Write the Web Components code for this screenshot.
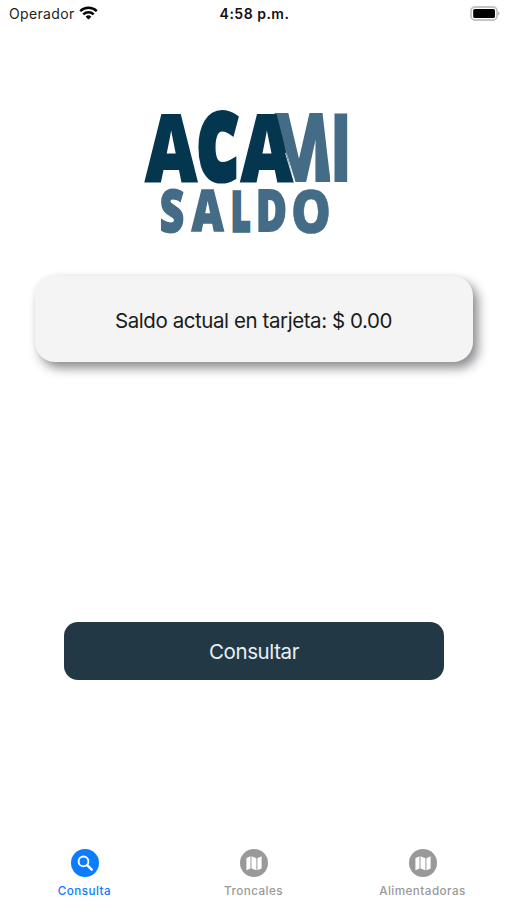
<!DOCTYPE html>
<html lang="es">
<head>
<meta charset="utf-8">
<meta name="viewport" content="width=device-width, initial-scale=1">
<title>ACAMI Saldo</title>
<style>
  html, body { height: 100%; margin: 0; }
  body {
    background: #fff;
    color: #1b1b1b;
    font-family: Inter, "Liberation Sans", sans-serif;
    overflow: hidden;
  }
</style>
</head>
<body>
<saldo-app></saldo-app>

<script>
// status bar
class StatusBar extends HTMLElement {
  constructor() {
    super();
    this.attachShadow({ mode: 'open' });
    this.shadowRoot.innerHTML = `
      <style>
        :host {
          display: grid;
          grid-template-columns: 1fr auto 1fr;
          align-items: center;
          height: 28px;
          padding: 0 7px 0 9px;
          box-sizing: border-box;
          font-size: 14px;
          line-height: 28px;
          color: #222;
        }
        .carrier { display: flex; align-items: center; gap: 4px; letter-spacing: 0.35px; }
        .carrier svg { margin-top: -2px; }
        .time { font-weight: 600; letter-spacing: 0.5px; color: #111; }
        .battery { justify-self: end; }
        svg { display: block; }
      </style>
      <div class="carrier">
        <slot name="carrier"></slot>
        <svg width="19" height="14" viewBox="0 0 19 14">
          <g fill="none" stroke="#050505" stroke-width="2.5">
            <path d="M1.2 5.1a11.8 11.8 0 0 1 16.6 0"/>
            <path d="M4.3 8.4a7.4 7.4 0 0 1 10.4 0"/>
          </g>
          <path d="M9.5 13.6L6.6 10.7a4.1 4.1 0 0 1 5.8 0z" fill="#050505"/>
        </svg>
      </div>
      <div class="time"><slot name="time"></slot></div>
      <svg class="battery" width="30" height="17" viewBox="0 0 30 17">
        <rect x="1" y="1" width="26" height="13" rx="4" fill="#fff" stroke="#c4c4c4" stroke-width="1.8"/>
        <rect x="3.2" y="3" width="21.8" height="9" rx="1.6" fill="#000"/>
        <path d="M28.2 5.4c1.7.6 1.7 3.6 0 4.2z" fill="#aaa"/>
      </svg>
    `;
  }
}

// logo: every letter is stretched so its ink fills the given box
class AcamiLogo extends HTMLElement {
  constructor() {
    super();
    this._font = '800 100px "Open Sans", Lato, sans-serif';
    // [letter, left, top, right, bottom, outline, class]
    this._letters = [
      ['M', 123, 3, 187, 72, 2, 'light cut'],
      ['A', 0.5, 4.2, 54, 73, 2, 'dark'],
      ['C', 54.3, 0.8, 94.3, 74, 8, 'dark'],
      ['A', 96, 4.2, 150, 73, 2, 'dark'],
      ['I', 190, 3, 203.7, 72, 0, 'light'],
      ['S', 16.7, 79, 39.5, 123.7, 3, 'light'],
      ['A', 47, 80.8, 80.3, 122.8, 3, 'light'],
      ['L', 88.3, 80.3, 106.3, 122.3, 6, 'light'],
      ['D', 114, 80.3, 141.7, 122.3, 4, 'light'],
      ['O', 149.3, 79, 185, 123.7, 1, 'light']
    ];

    this.attachShadow({ mode: 'open' });
    this.shadowRoot.innerHTML = `
      <style>
        :host { display: block; width: 204px; height: 125px; }
        svg { display: block; overflow: visible; }
        text { font: ${this._font}; }
        .dark { fill: #05364f; stroke: #05364f; }
        .light { fill: #446c87; stroke: #446c87; }
      </style>
      <svg width="204" height="125" viewBox="0 0 204 125">
        <defs>
          <!-- trims the M along the second A and slants its right leg -->
          <clipPath id="cut"><path d="M130.5 3H178.5L186.5 72H151.5z"/></clipPath>
        </defs>
      </svg>
    `;
    this._svg = this.shadowRoot.querySelector('svg');
  }

  connectedCallback() {
    const ctx = document.createElement('canvas').getContext('2d');
    ctx.font = this._font;
    const ns = 'http://www.w3.org/2000/svg';

    for (const [letter, left, top, right, bottom, outline, cls] of this._letters) {
      const m = ctx.measureText(letter);
      const sx = (right - left) / (m.actualBoundingBoxRight + m.actualBoundingBoxLeft + outline);
      const sy = (bottom - top) / (m.actualBoundingBoxAscent + m.actualBoundingBoxDescent + outline);
      const x = left + (m.actualBoundingBoxLeft + outline / 2) * sx;
      const y = bottom - (m.actualBoundingBoxDescent + outline / 2) * sy;

      const g = document.createElementNS(ns, 'g');
      const text = document.createElementNS(ns, 'text');
      if (cls.includes('cut')) g.setAttribute('clip-path', 'url(#cut)');
      text.setAttribute('class', cls);
      text.setAttribute('stroke-width', outline);
      text.setAttribute('transform', `translate(${x} ${y}) scale(${sx} ${sy})`);
      text.textContent = letter;
      g.appendChild(text);
      this._svg.appendChild(g);
    }

    // thin gap between the A and the M
    const gap = document.createElementNS(ns, 'path');
    gap.setAttribute('d', 'M141.5 43L150.3 72.5');
    gap.setAttribute('stroke', '#fff');
    gap.setAttribute('stroke-width', '0.8');
    this._svg.appendChild(gap);
  }
}

class BalanceCard extends HTMLElement {
  constructor() {
    super();
    this.attachShadow({ mode: 'open' });
    this.shadowRoot.innerHTML = `
      <style>
        :host {
          display: flex;
          align-items: center;
          justify-content: center;
          width: 438px;
          height: 86px;
          padding-top: 2px;
          box-sizing: border-box;
          border-radius: 20px;
          background: #f4f4f4;
          box-shadow: 5px 6px 11px rgba(0, 0, 10, 0.46), -1px -1px 4px rgba(0, 0, 0, 0.03);
          font-size: 20.5px;
          letter-spacing: -0.42px;
          white-space: nowrap;
        }
      </style>
      <span><slot></slot></span>
    `;
  }
}

class MainButton extends HTMLElement {
  constructor() {
    super();
    this.attachShadow({ mode: 'open' });
    this.shadowRoot.innerHTML = `
      <style>
        :host { display: block; width: 380px; height: 58px; }
        button {
          width: 100%;
          height: 100%;
          padding: 1px 0 0 1px;
          border: 0;
          border-radius: 14px;
          background: #233845;
          color: #e6f0f6;
          font: inherit;
          font-size: 20.5px;
          letter-spacing: -0.4px;
        }
      </style>
      <button type="button"><slot></slot></button>
    `;
  }
}

class TabItem extends HTMLElement {
  constructor() {
    super();
    const icons = {
      search: `
        <circle cx="12.5" cy="12.4" r="4.9" fill="none" stroke="#fff" stroke-width="1.9"/>
        <path d="M16.2 16.1l4.5 4.5" stroke="#fff" stroke-width="2.5" stroke-linecap="round"/>`,
      map: `
        <path fill="#fff" d="M6.4 9.2L10.5 7.3V19.4L6.4 21.3zM11.5 7.3L16.4 9.2V21.3L11.5 19.4zM17.4 9.2L21.6 7.3V19.4L17.4 21.3z"/>`
    };
    this.attachShadow({ mode: 'open' });
    this.shadowRoot.innerHTML = `
      <style>
        :host {
          display: flex;
          flex: 1;
          flex-direction: column;
          align-items: center;
          gap: 6px;
          color: #999;
          font-size: 11.7px;
          font-weight: 500;
          line-height: 16px;
          letter-spacing: 0.45px;
        }
        :host([active]) { color: #0a7cff; }
        svg { display: block; }
      </style>
      <svg width="28" height="28" viewBox="0 0 28 28">
        <circle cx="14" cy="14" r="14" fill="currentColor"/>
        ${icons[this.getAttribute('icon')]}
      </svg>
      <span><slot></slot></span>
    `;
  }
}

class TabBar extends HTMLElement {
  constructor() {
    super();
    this.attachShadow({ mode: 'open' });
    this.shadowRoot.innerHTML = `
      <style>
        :host { display: flex; height: 51px; }
      </style>
      <slot></slot>
    `;
  }
}

class SaldoApp extends HTMLElement {
  constructor() {
    super();
    this.attachShadow({ mode: 'open' });
    this.shadowRoot.innerHTML = `
      <style>
        :host { display: flex; flex-direction: column; height: 900px; }
        main {
          flex: 1;
          display: flex;
          flex-direction: column;
          align-items: center;
          padding-top: 82px;
        }
        acami-logo { margin-right: 15px; }
        balance-card { margin-top: 41px; }
        main-button { margin-top: 260px; }
      </style>
      <status-bar>
        <span slot="carrier">Operador</span>
        <span slot="time">4:58 p.m.</span>
      </status-bar>
      <main>
        <acami-logo></acami-logo>
        <balance-card>Saldo actual en tarjeta: $ 0.00</balance-card>
        <main-button>Consultar</main-button>
      </main>
      <tab-bar>
        <tab-item icon="search" active>Consulta</tab-item>
        <tab-item icon="map">Troncales</tab-item>
        <tab-item icon="map">Alimentadoras</tab-item>
      </tab-bar>
    `;
  }
}

customElements.define('status-bar', StatusBar);
customElements.define('acami-logo', AcamiLogo);
customElements.define('balance-card', BalanceCard);
customElements.define('main-button', MainButton);
customElements.define('tab-item', TabItem);
customElements.define('tab-bar', TabBar);
customElements.define('saldo-app', SaldoApp);
</script>
</body>
</html>
